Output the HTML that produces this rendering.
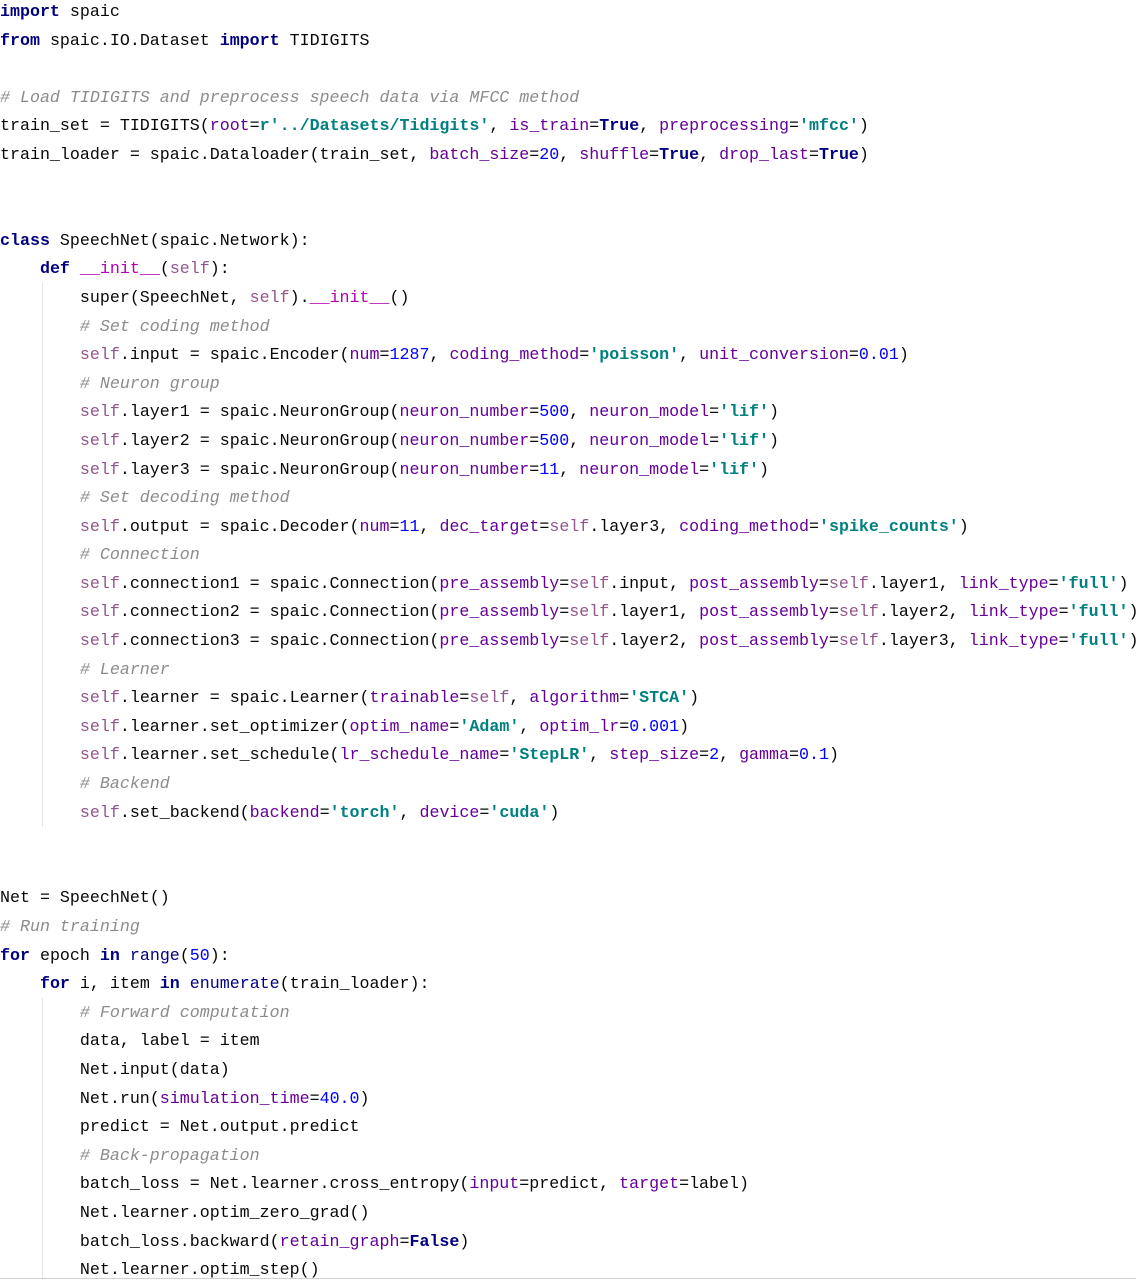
<!DOCTYPE html>
<html><head><meta charset="utf-8"><style>
html,body{margin:0;padding:0;background:#fff;width:1136px;height:1280px;overflow:hidden;position:relative}
pre{margin:0;position:absolute;left:0;top:-2px;font-family:"Liberation Mono",monospace;font-size:16.65px;line-height:28.6px;color:#080808;white-space:pre}
.k{color:#000080;font-weight:bold}
.p{color:#660099}
.s{color:#008080;font-weight:bold}
.n{color:#0000ff}
.f{color:#94558d}
.c{color:#8c8c8c;font-style:italic}
.d{color:#b200b2}
.b{color:#000080}
.g{position:absolute;width:1px;background:#e4e4e4}
.bot{position:absolute;left:0;top:1278px;width:1136px;height:1px;background:#d0d0d0}
</style></head><body>
<div class="g" style="left:42px;top:283px;height:544px"></div>
<div class="g" style="left:42px;top:998px;height:282px"></div>
<div class="bot"></div>
<pre><span class="k">import</span> spaic
<span class="k">from</span> spaic.IO.Dataset <span class="k">import</span> TIDIGITS

<span class="c"># Load TIDIGITS and preprocess speech data via MFCC method</span>
train_set = TIDIGITS(<span class="p">root</span>=<span class="s">r'../Datasets/Tidigits'</span>, <span class="p">is_train</span>=<span class="k">True</span>, <span class="p">preprocessing</span>=<span class="s">'mfcc'</span>)
train_loader = spaic.Dataloader(train_set, <span class="p">batch_size</span>=<span class="n">20</span>, <span class="p">shuffle</span>=<span class="k">True</span>, <span class="p">drop_last</span>=<span class="k">True</span>)


<span class="k">class</span> SpeechNet(spaic.Network):
    <span class="k">def</span> <span class="d">__init__</span>(<span class="f">self</span>):
        super(SpeechNet, <span class="f">self</span>).<span class="d">__init__</span>()
        <span class="c"># Set coding method</span>
        <span class="f">self</span>.input = spaic.Encoder(<span class="p">num</span>=<span class="n">1287</span>, <span class="p">coding_method</span>=<span class="s">'poisson'</span>, <span class="p">unit_conversion</span>=<span class="n">0.01</span>)
        <span class="c"># Neuron group</span>
        <span class="f">self</span>.layer1 = spaic.NeuronGroup(<span class="p">neuron_number</span>=<span class="n">500</span>, <span class="p">neuron_model</span>=<span class="s">'lif'</span>)
        <span class="f">self</span>.layer2 = spaic.NeuronGroup(<span class="p">neuron_number</span>=<span class="n">500</span>, <span class="p">neuron_model</span>=<span class="s">'lif'</span>)
        <span class="f">self</span>.layer3 = spaic.NeuronGroup(<span class="p">neuron_number</span>=<span class="n">11</span>, <span class="p">neuron_model</span>=<span class="s">'lif'</span>)
        <span class="c"># Set decoding method</span>
        <span class="f">self</span>.output = spaic.Decoder(<span class="p">num</span>=<span class="n">11</span>, <span class="p">dec_target</span>=<span class="f">self</span>.layer3, <span class="p">coding_method</span>=<span class="s">'spike_counts'</span>)
        <span class="c"># Connection</span>
        <span class="f">self</span>.connection1 = spaic.Connection(<span class="p">pre_assembly</span>=<span class="f">self</span>.input, <span class="p">post_assembly</span>=<span class="f">self</span>.layer1, <span class="p">link_type</span>=<span class="s">'full'</span>)
        <span class="f">self</span>.connection2 = spaic.Connection(<span class="p">pre_assembly</span>=<span class="f">self</span>.layer1, <span class="p">post_assembly</span>=<span class="f">self</span>.layer2, <span class="p">link_type</span>=<span class="s">'full'</span>)
        <span class="f">self</span>.connection3 = spaic.Connection(<span class="p">pre_assembly</span>=<span class="f">self</span>.layer2, <span class="p">post_assembly</span>=<span class="f">self</span>.layer3, <span class="p">link_type</span>=<span class="s">'full'</span>)
        <span class="c"># Learner</span>
        <span class="f">self</span>.learner = spaic.Learner(<span class="p">trainable</span>=<span class="f">self</span>, <span class="p">algorithm</span>=<span class="s">'STCA'</span>)
        <span class="f">self</span>.learner.set_optimizer(<span class="p">optim_name</span>=<span class="s">'Adam'</span>, <span class="p">optim_lr</span>=<span class="n">0.001</span>)
        <span class="f">self</span>.learner.set_schedule(<span class="p">lr_schedule_name</span>=<span class="s">'StepLR'</span>, <span class="p">step_size</span>=<span class="n">2</span>, <span class="p">gamma</span>=<span class="n">0.1</span>)
        <span class="c"># Backend</span>
        <span class="f">self</span>.set_backend(<span class="p">backend</span>=<span class="s">'torch'</span>, <span class="p">device</span>=<span class="s">'cuda'</span>)


Net = SpeechNet()
<span class="c"># Run training</span>
<span class="k">for</span> epoch <span class="k">in</span> <span class="b">range</span>(<span class="n">50</span>):
    <span class="k">for</span> i, item <span class="k">in</span> <span class="b">enumerate</span>(train_loader):
        <span class="c"># Forward computation</span>
        data, label = item
        Net.input(data)
        Net.run(<span class="p">simulation_time</span>=<span class="n">40.0</span>)
        predict = Net.output.predict
        <span class="c"># Back-propagation</span>
        batch_loss = Net.learner.cross_entropy(<span class="p">input</span>=predict, <span class="p">target</span>=label)
        Net.learner.optim_zero_grad()
        batch_loss.backward(<span class="p">retain_graph</span>=<span class="k">False</span>)
        Net.learner.optim_step()</pre>
</body></html>
